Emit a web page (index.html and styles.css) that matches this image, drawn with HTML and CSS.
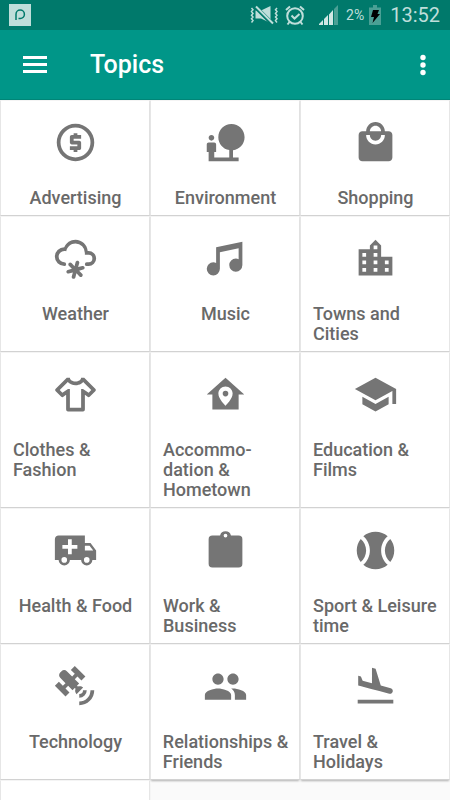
FILE: index.html
```html
<!DOCTYPE html>
<html lang="en">
<head>
<meta charset="utf-8">
<meta name="viewport" content="width=device-width, initial-scale=1">
<title>Topics</title>
<link rel="stylesheet" href="styles.css">
</head>
<body>
<div class="app">
  <div class="status">
    <svg class="status-app" viewBox="0 0 22 22" width="22" height="22" aria-hidden="true">
      <rect width="22" height="22" fill="#bfdeda"/>
      <path d="M7 16V10.200a4.200 4.200 0 1 1 4.200 4.200H9.500" fill="none" stroke="#00796b" stroke-width="1.500"/>
    </svg>
    <div class="status-right">
      <svg class="status-mute" viewBox="0 0 29 20" width="29" height="20" aria-hidden="true">
        <path d="M5.500 5.500H11L20.500 1V18L11 13.500H5.500z" fill="#bfdeda"/>
        <path d="M5.500 2l17 17" stroke="#00796b" stroke-width="4"/>
        <g fill="none" stroke="#bfdeda" stroke-width="1.500">
          <path d="M1.500 3l1.500 1.800-1.500 1.800L3 8.400l-1.500 1.800L3 12l-1.500 1.800L3 15.600 1.500 17.500M27 3l-1.500 1.800L27 6.600l-1.500 1.800 1.500 1.800-1.500 1.800 1.500 1.800-1.500 1.800L27 17.500"/>
          <path d="M6 1.500l17 17" stroke-width="2"/>
        </g>
      </svg>
      <svg class="status-alarm" viewBox="0 0 20 21" width="20" height="21" aria-hidden="true">
        <g fill="none" stroke="#bfdeda" stroke-width="2">
          <circle cx="10" cy="11" r="7.800"/>
          <path d="M1 5l4-3.500M19 5l-4-3.500M4.500 17l-2 2.500M15.500 17l2 2.500M6.500 10.500l3 3 5-4.500"/>
        </g>
      </svg>
      <svg class="status-signal" viewBox="0 0 20 20" width="20" height="20" aria-hidden="true">
        <path d="M0 20v-1l4-4v5zM5 20v-6l4-4v10zM10 20V9.500L14 5v15z" fill="#d0e7e4"/>
        <path d="M15 20V4l4-4v20z" fill="#4aa095"/>
      </svg>
      <span class="battery-level">2%</span>
      <svg class="status-battery" viewBox="0 0 12 20" width="12" height="20" aria-hidden="true">
        <path d="M0 2.500h4V0h4v2.500h4V20H0z" fill="#4aa095"/>
        <path d="M4 5h6L8.500 9H11l-7.500 9L5 12H2z" fill="#000"/>
      </svg>
      <span class="clock">13:52</span>
    </div>
  </div>

  <header class="toolbar">
    <button class="tool" type="button" aria-label="Menu">
      <svg viewBox="0 0 24 17" width="24" height="17" fill="#fff"><path d="M0 0h24v3H0zM0 7h24v3H0zM0 14h24v3H0z"/></svg>
    </button>
    <h1 class="title">Topics</h1>
    <button class="tool" type="button" aria-label="More options">
      <svg viewBox="0 0 6 22" width="6" height="22" fill="#fff"><circle cx="3" cy="3.500" r="2.700"/><circle cx="3" cy="11" r="2.700"/><circle cx="3" cy="18.500" r="2.700"/></svg>
    </button>
  </header>

  <main class="content">
    <nav class="grid" aria-label="Topics">
      <a class="card" href="#"><svg class="icon" viewBox="0 0 24 24" aria-hidden="true"><path d="M12 2a10 10 0 1 0 0 20 10 10 0 0 0 0-20zm0 18a8 8 0 1 1 0-16 8 8 0 0 1 0 16zM11 17h2v-1h1c.55 0 1-.45 1-1v-3c0-.55-.45-1-1-1h-3v-1h4V8h-2V7h-2v1h-1c-.55 0-1 .45-1 1v3c0 .55.45 1 1 1h3v1H9v2h2v1z"/></svg><span class="label">Advertising</span></a>
      <a class="card" href="#"><svg class="icon" viewBox="0 0 24 24" aria-hidden="true"><path d="M22.170 9.170c0-3.870-3.130-7-7-7s-7 3.130-7 7c0 3.470 2.520 6.340 5.830 6.890V20H6v-3h1v-4c0-.55-.45-1-1-1H3c-.55 0-1 .45-1 1v4h1v5h16v-2h-3v-3.880c3.470-.41 6.170-3.360 6.170-6.950zM4.500 11c.83 0 1.500-.67 1.500-1.500S5.330 8 4.500 8 3 8.670 3 9.500 3.670 11 4.500 11z"/></svg><span class="label">Environment</span></a>
      <a class="card" href="#"><svg class="icon" viewBox="0 0 24 24" aria-hidden="true"><path d="M19 6h-2c0-2.760-2.240-5-5-5S7 3.240 7 6H5c-1.100 0-1.990.9-1.990 2L3 20c0 1.100.9 2 2 2h14c1.100 0 2-.9 2-2V8c0-1.100-.9-2-2-2zm-7-3c1.660 0 3 1.340 3 3H9c0-1.660 1.340-3 3-3zm0 10c-2.760 0-5-2.240-5-5h2c0 1.660 1.340 3 3 3s3-1.340 3-3h2c0 2.760-2.240 5-5 5z"/></svg><span class="label">Shopping</span></a>

      <a class="card" href="#"><svg class="icon" viewBox="0 0 24 24" aria-hidden="true"><path d="M6,14A1,1 0 0,1 7,15A1,1 0 0,1 6,16A5,5 0 0,1 1,11A5,5 0 0,1 6,6C7,3.65 9.3,2 12,2C15.43,2 18.24,4.66 18.5,8.03L19,8A4,4 0 0,1 23,12A4,4 0 0,1 19,16H18A1,1 0 0,1 17,15A1,1 0 0,1 18,14H19A2,2 0 0,0 21,12A2,2 0 0,0 19,10H17V9A5,5 0 0,0 12,4C9.5,4 7.45,5.82 7.06,8.19C6.73,8.07 6.37,8 6,8A3,3 0 0,0 3,11A3,3 0 0,0 6,14M7.88,18.07L10.07,17.5L8.46,15.88C8.07,15.5 8.07,14.86 8.46,14.46C8.85,14.07 9.5,14.07 9.88,14.46L11.49,16.07L12.07,13.88C12.21,13.34 12.76,13.03 13.29,13.17C13.83,13.31 14.14,13.86 14,14.4L13.41,16.59L15.6,16C16.14,15.86 16.69,16.17 16.83,16.71C16.97,17.24 16.66,17.79 16.12,17.93L13.93,18.5L15.54,20.12C15.93,20.5 15.93,21.15 15.54,21.54C15.15,21.93 14.5,21.93 14.12,21.54L12.5,19.93L11.93,22.12C11.79,22.66 11.24,22.97 10.7,22.83C10.17,22.69 9.86,22.14 10,21.6L10.59,19.41L8.4,20C7.86,20.14 7.31,19.83 7.17,19.29C7.03,18.76 7.34,18.21 7.88,18.07Z"/></svg><span class="label">Weather</span></a>
      <a class="card" href="#"><svg class="icon" viewBox="0 0 24 24" aria-hidden="true"><path d="M21,3V15.5A3.5,3.5 0 0,1 17.5,19A3.5,3.5 0 0,1 14,15.5A3.5,3.5 0 0,1 17.5,12C18.04,12 18.55,12.12 19,12.34V6.47L9,8.6V17.5A3.5,3.5 0 0,1 5.5,21A3.5,3.5 0 0,1 2,17.5A3.5,3.5 0 0,1 5.5,14C6.04,14 6.55,14.12 7,14.34V6L21,3Z"/></svg><span class="label">Music</span></a>
      <a class="card" href="#"><svg class="icon" viewBox="0 0 24 24" aria-hidden="true"><path d="M15 11V5l-3-3-3 3v2H3v14h18V11h-6zm-8 8H5v-2h2v2zm0-4H5v-2h2v2zm0-4H5V9h2v2zm6 8h-2v-2h2v2zm0-4h-2v-2h2v2zm0-4h-2V9h2v2zm0-4h-2V5h2v2zm6 12h-2v-2h2v2zm0-4h-2v-2h2v2z"/></svg><span class="label">Towns and Cities</span></a>

      <a class="card" href="#"><svg class="icon" viewBox="0 0 24 24" aria-hidden="true"><path d="M16,21H8A1,1 0 0,1 7,20V12.07L5.7,13.12C5.31,13.5 4.68,13.5 4.29,13.12L1.46,10.29C1.07,9.9 1.07,9.27 1.46,8.88L7.34,3H9C9,4.1 10.34,5 12,5C13.66,5 15,4.1 15,3H16.66L22.54,8.88C22.93,9.27 22.93,9.9 22.54,10.29L19.71,13.12C19.32,13.5 18.69,13.5 18.3,13.12L17,12.07V20A1,1 0 0,1 16,21M20.42,9.58L16.11,5.28C15.8,5.63 15.43,5.94 15,6.2C14.16,6.7 13.13,7 12,7C10.3,7 8.79,6.32 7.88,5.3L3.58,9.58L5,11L8,9H9V19H15V9H16L19,11L20.42,9.58Z"/></svg><span class="label">Clothes &amp; Fashion</span></a>
      <a class="card" href="#"><svg class="icon" viewBox="0 0 24 24" aria-hidden="true"><path d="M12,3L2,12H5V20H19V12H22L12,3M12,7.7C14.1,7.7 15.8,9.4 15.8,11.5C15.8,14.5 12,18 12,18C12,18 8.2,14.5 8.2,11.5C8.2,9.4 9.9,7.7 12,7.7M12,10A1.5,1.5 0 0,0 10.5,11.5A1.5,1.5 0 0,0 12,13A1.5,1.5 0 0,0 13.5,11.5A1.5,1.5 0 0,0 12,10Z"/></svg><span class="label">Accommo-<br>dation &amp; Hometown</span></a>
      <a class="card" href="#"><svg class="icon" viewBox="0 0 24 24" aria-hidden="true"><path d="M5 13.180v4L12 21l7-3.820v-4L12 17l-7-3.820zM12 3L1 9l11 6 9-4.910V17h2V9L12 3z"/></svg><span class="label">Education &amp; Films</span></a>

      <a class="card" href="#"><svg class="icon" viewBox="0 0 24 24" aria-hidden="true"><path d="M18,18.5A1.5,1.5 0 0,0 19.5,17A1.5,1.5 0 0,0 18,15.5A1.5,1.5 0 0,0 16.5,17A1.5,1.5 0 0,0 18,18.5M19.5,9.5H17V12H21.46L19.5,9.5M6,18.5A1.5,1.5 0 0,0 7.5,17A1.5,1.5 0 0,0 6,15.5A1.5,1.5 0 0,0 4.5,17A1.5,1.5 0 0,0 6,18.5M20,8L23,12V17H21A3,3 0 0,1 18,20A3,3 0 0,1 15,17H9A3,3 0 0,1 6,20A3,3 0 0,1 3,17H1V6C1,4.89 1.89,4 3,4H17V8H20M8,6V9H5V11H8V14H10V11H13V9H10V6H8Z"/></svg><span class="label">Health &amp; Food</span></a>
      <a class="card" href="#"><svg class="icon" viewBox="0 0 24 24" aria-hidden="true"><path fill-rule="evenodd" d="M19,4H14.900A3,3 0 0,0 9.100,4H5A2,2 0 0,0 3,6V19A2,2 0 0,0 5,21H19A2,2 0 0,0 21,19V6A2,2 0 0,0 19,4M12,3A1,1 0 0,1 12,5A1,1 0 0,1 12,3Z"/></svg><span class="label">Work &amp; Business</span></a>
      <a class="card" href="#"><svg class="icon" viewBox="0 0 24 24" aria-hidden="true"><path d="M12,2C14.5,2 16.75,2.9 18.5,4.4C16.36,6.23 15,8.96 15,12C15,15.04 16.36,17.77 18.5,19.6C16.75,21.1 14.5,22 12,22C9.5,22 7.25,21.1 5.5,19.6C7.64,17.77 9,15.04 9,12C9,8.96 7.64,6.23 5.5,4.4C7.25,2.9 9.5,2 12,2M22,12C22,14.32 21.21,16.45 19.88,18.15C18.12,16.68 17,14.47 17,12C17,9.53 18.12,7.32 19.88,5.85C21.21,7.55 22,9.68 22,12M2,12C2,9.68 2.79,7.55 4.12,5.85C5.88,7.32 7,9.53 7,12C7,14.47 5.88,16.68 4.12,18.15C2.79,16.45 2,14.32 2,12Z"/></svg><span class="label">Sport &amp; Leisure time</span></a>

      <a class="card" href="#"><svg class="icon" viewBox="0 0 24 24" aria-hidden="true"><path d="M11.62,1L17.28,6.67L15.16,8.79L13.04,6.67L11.62,8.09L13.95,10.41L12.79,11.58L13.24,12.04C14.17,11.61 15.31,11.77 16.07,12.54L12.54,16.07C11.77,15.31 11.61,14.17 12.04,13.24L11.58,12.79L10.41,13.95L8.09,11.62L6.67,13.04L8.79,15.16L6.67,17.28L1,11.62L3.14,9.5L5.26,11.62L6.67,10.21L3.84,7.38C3.06,6.6 3.06,5.33 3.84,4.55L4.55,3.84C5.33,3.06 6.6,3.06 7.38,3.84L10.21,6.67L11.62,5.26L9.5,3.14L11.62,1M18,14A4,4 0 0,1 14,18V16A2,2 0 0,0 16,14H18M22,14A8,8 0 0,1 14,22V20A6,6 0 0,0 20,14H22Z"/></svg><span class="label">Technology</span></a>
      <a class="card" href="#"><svg class="icon" viewBox="0 0 24 24" aria-hidden="true"><path d="M16 11c1.660 0 2.990-1.340 2.990-3S17.660 5 16 5c-1.660 0-3 1.340-3 3s1.340 3 3 3zm-8 0c1.660 0 2.990-1.340 2.990-3S9.660 5 8 5C6.340 5 5 6.340 5 8s1.340 3 3 3zm0 2c-2.330 0-7 1.170-7 3.500V19h14v-2.500c0-2.330-4.670-3.500-7-3.500zm8 0c-.29 0-.62.02-.97.05 1.160.84 1.970 1.970 1.970 3.450V19h6v-2.500c0-2.330-4.670-3.500-7-3.500z"/></svg><span class="label">Relationships&nbsp;&amp; Friends</span></a>
      <a class="card" href="#"><svg class="icon" viewBox="0 0 24 24" aria-hidden="true"><path d="M2.500 19h19v2h-19zm7.180-5.730l4.350 1.160 5.310 1.420c.8.21 1.620-.26 1.840-1.060.21-.8-.26-1.620-1.060-1.840l-5.310-1.420-2.760-9.020L10.120 2v8.280L5.150 8.950l-.93-2.320-1.450-.39v5.170l1.600.43 5.310 1.430z"/></svg><span class="label">Travel &amp; Holidays</span></a>

      <div class="card card-next"></div>
    </nav>
  </main>
</div>
</body>
</html>
```
FILE: styles.css
```css
* {
  box-sizing: border-box;
}

body {
  margin: 0;
  background: #fafafa;
  font-family: Roboto, "Liberation Sans", sans-serif;
}

.app {
  display: flex;
  flex-direction: column;
  height: 100vh;
  overflow: hidden;
}

.status {
  display: flex;
  flex: none;
  align-items: center;
  justify-content: space-between;
  height: 30px;
  padding: 0 10px 0 9px;
  background: #00796b;
  color: #bfdeda;
}

.status-right {
  display: flex;
  align-items: center;
}

.status-alarm {
  margin: 0 14px 0 6px;
}

.battery-level {
  margin: 0 5px 0 7px;
  font-size: 14px;
}

.clock {
  margin-left: 9px;
  font-size: 20px;
}

.toolbar {
  display: flex;
  flex: none;
  align-items: center;
  height: 70px;
  padding: 0 4px 0 12px;
  border-bottom: 1px solid #008577;
  background: #009688;
  color: #fff;
}

.tool {
  display: flex;
  align-items: center;
  justify-content: center;
  width: 46px;
  height: 46px;
  padding: 0;
  border: 0;
  background: none;
}

.title {
  flex: 1;
  margin: 0 0 0 32px;
  font-size: 25px;
  font-weight: 500;
  line-height: 30px;
}

.content {
  flex: 1;
  min-height: 0;
  overflow: hidden;
}

.grid {
  display: grid;
  grid-template-columns: repeat(3, minmax(0, 1fr));
}

.card {
  display: flex;
  flex-direction: column;
  align-items: center;
  padding: 19px 11px 7px 12px;
  border: 1px solid #e6e6e6;
  border-top-color: #f4f4f4;
  border-bottom-color: #d2d2d2;
  background: #fff;
  box-shadow: 0 2px 2px -1px rgba(0, 0, 0, 0.3);
  color: #696969;
  text-decoration: none;
}

.card-next {
  min-height: 116px;
}

.icon {
  width: 45px;
  height: 45px;
  margin-bottom: 23px;
  fill: #757575;
}

.label {
  font-size: 18px;
  font-weight: 500;
  line-height: 20px;
}
```
